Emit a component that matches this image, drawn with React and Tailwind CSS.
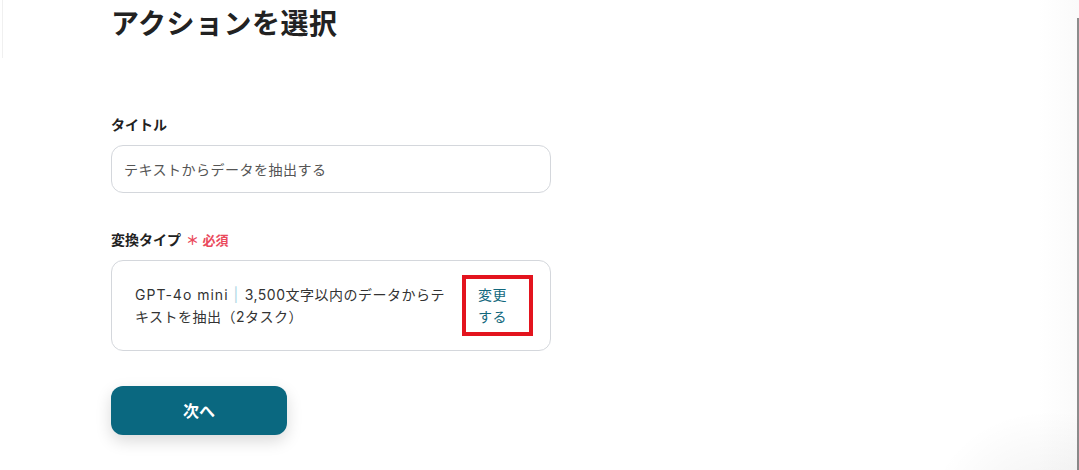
import React from "react";

const App = () => {
  return (
    <div
      className="relative w-[1079px] h-[470px] overflow-hidden bg-white text-[#333]"
      style={{ fontFamily: '"Noto Sans", "Noto Sans CJK JP", sans-serif' }}
    >
      {/* faint left rule */}
      <div className="absolute left-[2px] top-0 h-[58px] w-px bg-[#f0f0f0]" />
      {/* right scrollbar edge */}
      <div className="absolute right-0 top-0 h-full w-[40px] bg-gradient-to-r from-white to-[#fafafa]" />
      <div className="absolute right-0 top-[18px] bottom-0 w-[2px] bg-[#8c8c8c]" />
      {/* bottom-right soft shadow */}
      <div className="absolute left-[930px] top-[410px] h-[200px] w-[240px] rounded-full bg-[radial-gradient(closest-side,rgba(0,0,0,0.06),rgba(0,0,0,0))]" />

      <div className="relative pl-[111px] w-[551px]">
        <h1 className="text-[28px] font-bold leading-[46px] text-[#222] tracking-[0.5px]">
          アクションを選択
        </h1>

        <div className="mt-[70px]">
          <label className="block text-[14px] font-bold leading-[18px] text-[#222]">
            タイトル
          </label>
          <div className="mt-[11px] h-[48px] rounded-[12px] border border-[#d4d7dc] flex items-center px-[12px] text-[14px] tracking-[0.5px] text-[#555]">
            テキストからデータを抽出する
          </div>
        </div>

        <div className="mt-[38px]">
          <label className="flex items-center text-[14px] font-bold leading-[18px] text-[#222]">
            変換タイプ
            <span className="ml-[5px] text-[13px] font-bold text-[#ea4a5c]">
              ＊ 必須
            </span>
          </label>
          <div className="mt-[11px] h-[91px] rounded-[12px] border border-[#d4d7dc] flex items-center pl-[23px]">
            <div
              className="w-[327px] shrink-0 text-[14px] leading-[22px] tracking-[0.5px] text-[#333]"
              style={{ fontFamily: 'Inter, "Noto Sans CJK JP", sans-serif' }}
            >
              <div className="whitespace-nowrap">
                <span className="tracking-[1px]">GPT-4o mini</span>
                <span className="ml-[5px] mr-[6px] text-[#a9d3e4]">|</span>
                <span>3,500文字以内のデータからテ</span>
              </div>
              <div className="whitespace-nowrap">キストを抽出（2タスク）</div>
            </div>
            <div className="shrink-0 border-[4px] border-[#e3141e] h-[61px] w-[71px] flex items-center pl-[12px]">
              <a className="w-[32px] text-[14px] leading-[22px] tracking-[0.5px] text-[#12687d]">
                変更する
              </a>
            </div>
          </div>
        </div>

        <button className="mt-[35px] h-[49px] w-[176px] rounded-[12px] bg-[#0a6880] text-white text-[16px] font-bold shadow-[0_6px_16px_rgba(0,0,0,0.15)]">
          次へ
        </button>
      </div>
    </div>
  );
};

export default App;
